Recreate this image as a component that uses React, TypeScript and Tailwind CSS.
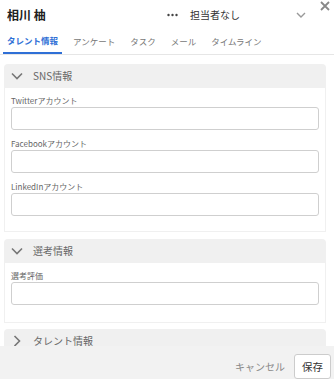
import React from 'react';

const font = { fontFamily: '"Noto Sans CJK JP", "Noto Sans", sans-serif' };

const tabs = ['タレント情報', 'アンケート', 'タスク', 'メール', 'タイムライン'];

const Chevron: React.FC<{ open: boolean }> = ({ open }) => (
  <svg width="12" height="12" viewBox="0 0 12 12" className="shrink-0">
    {open ? (
      <path d="M1 3.5 L6 8.5 L11 3.5" fill="none" stroke="#777" strokeWidth="1.6" />
    ) : (
      <path d="M3.5 1 L8.5 6 L3.5 11" fill="none" stroke="#777" strokeWidth="1.6" />
    )}
  </svg>
);

const Field: React.FC<{ label: string }> = ({ label }) => (
  <div className="flex flex-col">
    <span className="text-[8px] leading-[11px] text-[#666]">{label}</span>
    <div className="mt-[1px] h-[23px] rounded-[3px] border border-[#cfcfcf] bg-white"></div>
  </div>
);

const SectionHeader: React.FC<{ title: string; open: boolean }> = ({ title, open }) => (
  <div className="flex h-[24px] items-center gap-[10px] rounded-t-[4px] bg-[#f0f0f0] pl-[7px]">
    <Chevron open={open} />
    <span className="text-[10px] leading-[10px] text-[#666]">{title}</span>
  </div>
);

export default function App() {
  return (
    <div className="flex h-[379px] w-[334px] flex-col overflow-hidden bg-white" style={font}>
      {/* header */}
      <div className="relative flex h-[29px] items-center pl-[7px]">
        <span className="text-[12px] font-bold text-[#222]">相川 柚</span>
        <svg width="11" height="4" viewBox="0 0 11 4" className="ml-auto">
          <circle cx="1.5" cy="2" r="1.2" fill="#444" />
          <circle cx="5.5" cy="2" r="1.2" fill="#444" />
          <circle cx="9.5" cy="2" r="1.2" fill="#444" />
        </svg>
        <span className="w-[118px] pl-[12px] text-[10px] text-[#333]">担当者なし</span>
        <svg width="10" height="8" viewBox="0 0 10 8" className="mr-[28px] mt-[1px]">
          <path d="M1 2 L5 6 L9 2" fill="none" stroke="#999" strokeWidth="1.4" />
        </svg>
        <svg width="10" height="10" viewBox="0 0 10 10" className="absolute right-[4px] top-[1px]">
          <path d="M1 1 L9 9 M9 1 L1 9" stroke="#888" strokeWidth="1.8" />
        </svg>
      </div>

      {/* tabs */}
      <div className="flex h-[26px] items-stretch gap-[7px] border-b border-[#e6e6e6] pl-[3px]">
        {tabs.map((t, i) => (
          <div
            key={t}
            className={
              i === 0
                ? 'flex items-center border-b-2 border-[#2f6fd6] px-[4px] text-[8.5px] font-bold text-[#2f6fd6]'
                : 'flex items-center px-[4px] text-[8.5px] text-[#777]'
            }
          >
            {t}
          </div>
        ))}
      </div>

      {/* body */}
      <div className="flex-1 overflow-hidden pl-[4px] pr-[8px] pt-[9px]">
        <SectionHeader title="SNS情報" open />
        <div className="flex flex-col gap-[8px] border-x border-b border-[#f0f0f0] px-[6px] pb-[15px] pt-[7px]">
          <Field label="Twitterアカウント" />
          <Field label="Facebookアカウント" />
          <Field label="LinkedInアカウント" />
        </div>

        <div className="mt-[7px]">
          <SectionHeader title="選考情報" open />
        </div>
        <div className="flex flex-col border-x border-b border-[#f0f0f0] px-[6px] pb-[17px] pt-[7px]">
          <Field label="選考評価" />
        </div>

        <div className="mt-[6px]">
          <SectionHeader title="タレント情報" open={false} />
        </div>
      </div>

      {/* footer */}
      <div className="flex h-[33px] shrink-0 items-center justify-end bg-[#f2f2f2] pr-[3px]">
        <span className="mr-[9px] mt-[8px] text-[10px] text-[#888]">キャンセル</span>
        <button className="mt-[8px] h-[25px] rounded-[3px] border border-[#ccc] bg-white px-[7px] text-[10.5px] text-[#333]">
          保存
        </button>
      </div>
    </div>
  );
}
